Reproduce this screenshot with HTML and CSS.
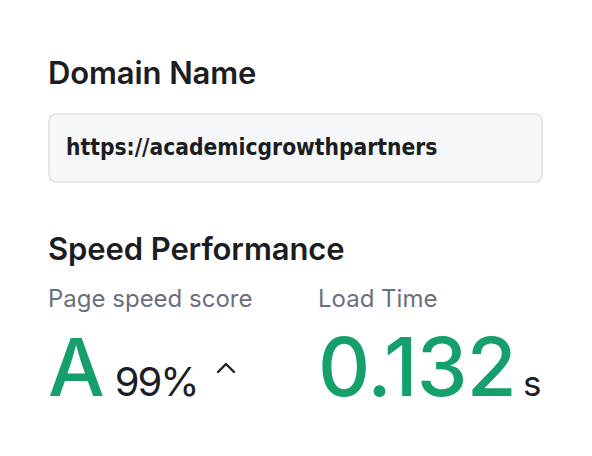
FILE: index.html
```
<!DOCTYPE html>
<html>
<head>
<meta charset="utf-8">
<link rel="stylesheet" href="styles.css">
</head>
<body>
<main class="panel">
  <section class="field">
    <h2 class="title">Domain Name</h2>
    <div class="input">https://academicgrowthpartners</div>
  </section>
  <section class="speed">
    <h2 class="title">Speed Performance</h2>
    <div class="metrics">
      <div class="metric score">
        <div class="label">Page speed score</div>
        <div class="value">
          <span class="grade">A</span>
          <span class="pct">99%</span>
          <svg class="chev" width="20" height="14" viewBox="0 0 20 14"><path d="M2 11 L10 3 L18 11" fill="none" stroke="#1f2024" stroke-width="2.4" stroke-linecap="round" stroke-linejoin="round"/></svg>
        </div>
      </div>
      <div class="metric load">
        <div class="label">Load Time</div>
        <div class="value">
          <span class="time">0.132</span><span class="unit">s</span>
        </div>
      </div>
    </div>
  </section>
</main>
</body>
</html>
```

FILE: styles.css
```
html, body { margin: 0; padding: 0; background: #fff; }
body { font-family: Inter, "Noto Sans", sans-serif; color: #1c1d22; }
.panel { padding: 54px 49px 0 48px; }
.title { margin: 0; font-size: 31px; font-weight: 600; line-height: 38px; letter-spacing: -0.1px; }
.input {
  margin-top: 21px;
  height: 70px;
  box-sizing: border-box;
  border: 2px solid #e3e5e8;
  border-radius: 8px;
  background: #f6f7f8;
  display: flex; align-items: center;
  padding: 0 16px 2px;
  font-family: "DejaVu Sans Condensed", "DejaVu Sans", sans-serif;
  font-weight: bold;
  font-size: 22.6px;
  color: #1c1d22;
}
.speed { margin-top: 47px; }
.metrics { display: flex; margin-top: 16px; }
.metric.score { width: 270px; }
.label { font-size: 24px; color: #6b6f7d; line-height: 30px; }
.value { display: flex; align-items: baseline; margin-top: 13px; }
.grade { font-size: 80px; color: #15a06b; line-height: 80px; font-weight: 500; }
.pct { font-size: 40px; margin-left: 10px; letter-spacing: -2px; }
.chev { margin-left: 18px; position: relative; top: -21px; }
.time { font-size: 81px; color: #15a06b; line-height: 80px; font-weight: 500; letter-spacing: -0.8px; }
.unit { font-size: 35px; margin-left: 7px; }
```
